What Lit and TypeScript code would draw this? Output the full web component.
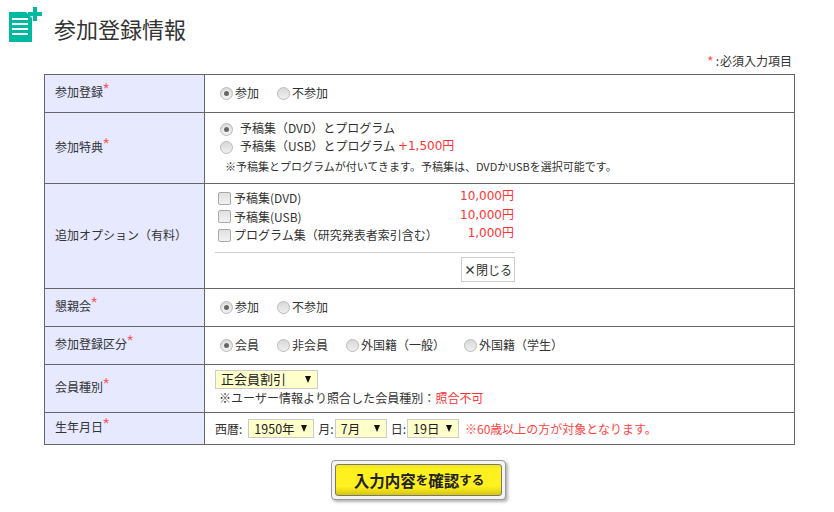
import { LitElement, html, css } from "lit";
import { customElement } from "lit/decorators.js";

const radio = (on: boolean) => html`<span class="radio ${on ? "on" : ""}"></span>`;
const check = () => html`<span class="check"></span>`;
const req = html`<span class="req">*</span>`;
const sel = (t: string, cls: string) => html`<span class="sel ${cls}"><span>${t}</span><span class="arr"></span></span>`;

@customElement("app-root")
export class AppRoot extends LitElement {
  static styles = css`
    :host { display: block; width: 834px; height: 512px; background: #fff; color: #333; overflow: hidden;
      font-family: "Noto Sans CJK JP", "Noto Sans", sans-serif; font-size: 12px; line-height: 18px; }
    .head { display: flex; align-items: flex-start; height: 53px; padding-left: 9px; }
    .icon { width: 34px; height: 36px; margin-top: 7px; flex: none; }
    .head h1 { margin: 14px 0 0 11px; font-size: 22px; line-height: 28px; font-weight: 400; color: #333; }
    .note { height: 21px; width: 792px; text-align: right; line-height: 16px; box-sizing: border-box; }
    .note .req { margin-right: 2px; font-size: 14px; line-height: 0; position: relative; top: 1px; }
    .note .colon { margin-right: 1px; }
    .req { color: #f55; }
    table { border-collapse: collapse; table-layout: fixed; width: 751px; margin-left: 44px; }
    th, td { border: 1px solid #666; padding: 0; font-weight: 400; text-align: left; vertical-align: middle; }
    th { width: 160px; background: #e6e9ff; padding: 0 0 3px 10px; box-sizing: border-box; }
    th .req { font-size: 19px; position: relative; top: 1px; left: -1px; line-height: 0; font-weight: 300; }
    td { padding: 0 0 2px 15px; }
    .r1, .r4, .r5 { height: 38px; }
    .r2 { height: 71px; }
    .r3 { height: 105px; }
    .r6 { height: 48px; }
    .r7 { height: 32px; }
    .line { display: flex; align-items: center; height: 18px; }
    .radio { width: 13px; height: 13px; border-radius: 50%; box-sizing: border-box; border: 1px solid #bbb;
      background: linear-gradient(#d8d8d8, #efefef); display: inline-flex; align-items: center; justify-content: center; flex: none; margin-right: 2px; position: relative; top: 1px; }
    .radio.on::after { content: ""; width: 5px; height: 5px; border-radius: 50%; background: #666; box-shadow: 0 0 1px 1px #fff8; }
    .check { width: 11px; height: 11px; border: 1px solid #aaa; border-radius: 2px; background: linear-gradient(#e0e0e0, #f2f2f2); flex: none; margin-right: 3px; }
    .w1 { margin-right: 18px; }
    .w2 { margin-right: 19px; }
    .price { color: #f33; }
    .num { font-family: "DejaVu Sans", "Noto Sans CJK JP", sans-serif; }
    .t2 { vertical-align: top; padding-top: 6px; }
    .t2 .radio { margin-right: 7px; }
    .t2 .line { height: 18px; }
    .small { font-size: 11px; line-height: 18px; margin-left: 5px; margin-top: 2px; }
    .optcell { padding: 0 0 0 10px; vertical-align: top; }
    .opts { width: 300px; border-bottom: 1px solid #ccc; padding: 5px 1px 7.5px 3px; box-sizing: border-box; }
    .opt { display: flex; justify-content: space-between; height: 18.5px; align-items: center; }
    .opt > div { display: flex; align-items: center; }
    .opt .price { position: relative; top: -2px; }
    .closebar { width: 300px; display: flex; justify-content: flex-end; padding-top: 4px; }
    .close { border: 1px solid #ccc; width: 52px; height: 23px; display: flex; align-items: center; justify-content: center; }
    .close b { font-weight: 700; }
    .sel { display: inline-flex; align-items: center; justify-content: space-between; background: #ffc; border: 1px solid #ccc;
      height: 17px; padding: 0 6px 0 5px; color: #222; font-size: 12.5px; }
    .arr { width: 0; height: 0; border-left: 3.5px solid transparent; border-right: 3.5px solid transparent; border-top: 7px solid #111; }
    .s0 { width: 90px; font-size: 13px; }
    .s1 { width: 53px; }
    .s2 { width: 39px; }
    .s3 { width: 39px; }
    .t6 { padding-left: 10px; }
    .t7 { padding: 0 0 0 10px; }
    .subnote { margin: 1px 0 0 4px; line-height: 16px; letter-spacing: 0.05px; }
    .dob { display: flex; align-items: center; }
    .lab { margin-right: 6px; }
    .lab2 { margin: 0 1px 0 4px; }
    .warn { margin-left: 6px; color: #f44; }
    .btnwrap { display: flex; justify-content: center; width: 749px; margin: 15px 0 0 44px; }
    .btnouter { width: 175px; height: 40px; box-sizing: border-box; border: 1px solid #999; border-radius: 4px; background: #f4f4f4; padding: 3px;
      box-shadow: 2px 2px 3px rgba(0,0,0,.3); display: flex; }
    .btn { flex: 1; box-sizing: border-box; border: 1px solid #777; border-radius: 3px;
      background: linear-gradient(#f3e51e, #fff020 15%, #fff020 72%, #d6c60e); display: flex; align-items: center; justify-content: center;
      font-weight: 700; font-size: 15.5px; color: #222; padding: 0 0 1px 1px; }
    .btn small { font-size: 12.5px; font-weight: 700; }
  `;

  render() {
    return html`
      <div class="head">
        <svg class="icon" viewBox="0 0 34 36">
          <path d="M0 5H17L23 11V35H0Z" fill="#00b9a0"/>
          <path d="M19 5H24V0H28V5H33V9H28V14H24V9H19Z" fill="#00b9a0"/>
          <path d="M3 12h16M3 17h16M3 22h16M3 27h16" stroke="#fff" stroke-width="2"/>
        </svg>
        <h1>参加登録情報</h1>
      </div>
      <div class="note"><span class="req">*</span><span class="colon">:</span>必須入力項目</div>
      <table>
        <tr class="r1"><th>参加登録${req}</th><td><div class="line">${radio(true)}<span class="w1">参加</span>${radio(false)}<span>不参加</span></div></td></tr>
        <tr class="r2"><th>参加特典${req}</th><td class="t2">
          <div class="line">${radio(true)}予稿集（DVD）とプログラム</div>
          <div class="line">${radio(false)}予稿集（USB）とプログラム&nbsp;<span class="price num">+1,500円</span></div>
          <div class="small">※予稿集とプログラムが付いてきます。予稿集は、DVDかUSBを選択可能です。</div>
        </td></tr>
        <tr class="r3"><th>追加オプション（有料）</th><td class="optcell">
          <div class="opts">
            <div class="opt"><div>${check()}予稿集(DVD)</div><span class="price num">10,000円</span></div>
            <div class="opt"><div>${check()}予稿集(USB)</div><span class="price num">10,000円</span></div>
            <div class="opt"><div>${check()}プログラム集（研究発表者索引含む）</div><span class="price num">1,000円</span></div>
          </div>
          <div class="closebar"><div class="close"><span><b>×</b>閉じる</span></div></div>
        </td></tr>
        <tr class="r4"><th>懇親会${req}</th><td><div class="line">${radio(true)}<span class="w1">参加</span>${radio(false)}<span>不参加</span></div></td></tr>
        <tr class="r5"><th>参加登録区分${req}</th><td><div class="line">${radio(true)}<span class="w1">会員</span>${radio(false)}<span class="w1">非会員</span>${radio(false)}<span class="w2">外国籍（一般）</span>${radio(false)}<span>外国籍（学生）</span></div></td></tr>
        <tr class="r6"><th>会員種別${req}</th><td class="t6">
          ${sel("正会員割引", "s0")}
          <div class="subnote">※ユーザー情報より照合した会員種別：<span class="price">照合不可</span></div>
        </td></tr>
        <tr class="r7"><th>生年月日${req}</th><td class="t7"><div class="dob"><span class="lab">西暦:</span>${sel("1950年", "s1")}<span class="lab2">月:</span>${sel("7月", "s2")}<span class="lab2">日:</span>${sel("19日", "s3")}<span class="warn">※60歳以上の方が対象となります。</span></div></td></tr>
      </table>
      <div class="btnwrap"><div class="btnouter"><div class="btn">入力内容<small>を</small>確認<small>する</small></div></div></div>
    `;
  }
}
